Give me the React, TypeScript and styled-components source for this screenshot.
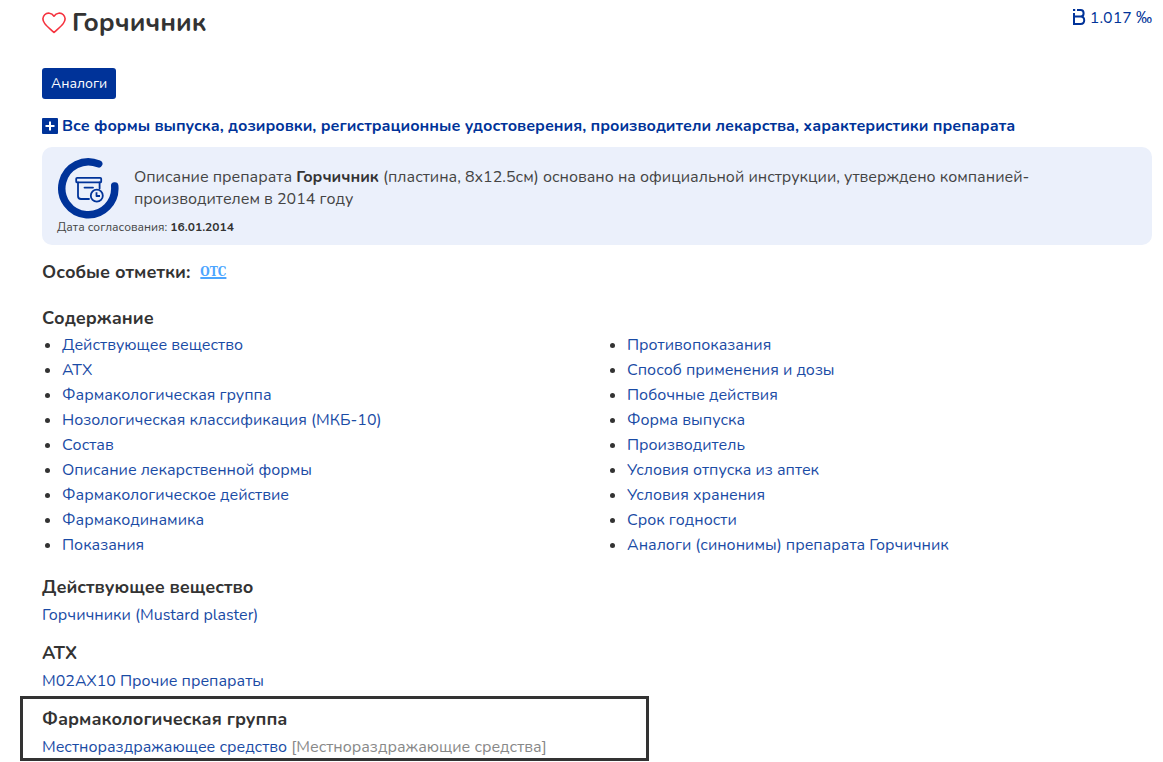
import React from "react";
import styled, { createGlobalStyle } from "styled-components";

const GlobalStyle = createGlobalStyle`
  * { box-sizing: border-box; }
  body {
    margin: 0;
    background: #ffffff;
    color: #333333;
    font-family: Nunito, "Noto Sans", sans-serif;
    font-size: 16px;
    line-height: 25px;
  }
  p, h1, h2, ul { margin: 0; padding: 0; }
`;

const Page = styled.main`
  padding: 0 11px 0 20px;
`;

const Body = styled.div`
  padding-left: 22px;
`;

const Header = styled.header`
  display: flex;
  justify-content: space-between;
  align-items: flex-start;
  padding-top: 5px;
`;

const TitleGroup = styled.div`
  display: flex;
  align-items: center;
  gap: 6px;
`;

const Title = styled.h1`
  font-size: 26px;
  line-height: 36px;
  font-weight: 700;
`;

const FavoriteButton = styled.button`
  display: flex;
  padding: 0;
  border: 0;
  background: none;
  color: #f5333f;
  cursor: pointer;
`;

const Rating = styled.a`
  display: flex;
  align-items: center;
  gap: 4px;
  color: #003399;
  text-decoration: none;
`;

const Permille = styled.span`
  font-family: "Liberation Sans", sans-serif;
`;

const AnalogsButton = styled.button`
  display: block;
  height: 31px;
  margin-top: 27px;
  padding: 0 9px;
  border: 0;
  border-radius: 3px;
  background: #003399;
  color: #ffffff;
  font-family: inherit;
  font-size: 14px;
  cursor: pointer;
`;

const FormsLink = styled.a`
  display: flex;
  align-items: center;
  gap: 4px;
  margin-top: 15px;
  color: #003399;
  font-weight: 700;
  text-decoration: none;
`;

const Notice = styled.section`
  margin-top: 8px;
  padding: 10px 15px 9px;
  border-radius: 10px;
  background: #ebf0fb;
`;

const NoticeRow = styled.div`
  display: flex;
  align-items: center;
  gap: 15px;
`;

const NoticeText = styled.p`
  max-width: 920px;
  line-height: 22px;
  color: #444444;
`;

const NoticeDate = styled.p`
  font-size: 12px;
  line-height: 17px;
  color: #444444;
`;

const Strong = styled.b`
  color: #333333;
  font-weight: 700;
`;

const Marks = styled.div`
  display: flex;
  align-items: center;
  gap: 10px;
  margin-top: 14px;
`;

const Heading = styled.h2`
  font-size: 18px;
  line-height: 26px;
  font-weight: 700;
`;

const OtcLink = styled.a`
  color: #4da6ff;
  font-family: "DejaVu Serif Condensed", "DejaVu Serif", serif;
  font-size: 12px;
  font-weight: 700;
  text-decoration-thickness: 2px;
`;

const Contents = styled.nav`
  margin-top: 20px;
`;

const Columns = styled.div`
  display: grid;
  grid-template-columns: 1fr 1fr;
  gap: 20px;
  padding-top: 2px;
`;

const List = styled.ul`
  padding-left: 20px;
`;

const TextLink = styled.a`
  color: #1a4ba5;
  text-decoration: none;
`;

const Entry = styled.p`
  padding-top: 5px;
  line-height: 21px;
`;

const Section = styled.section<{ $top: number }>`
  margin-top: ${(p) => p.$top}px;
`;

const Highlight = styled.section`
  width: 629px;
  max-width: 100%;
  margin-top: 4px;
  padding: 7px 19px 0;
  border: 3px solid #333333;
`;

const Muted = styled.span`
  color: #888888;
`;

const HeartIcon = () => (
  <svg width="24" height="22" viewBox="0 0 24 22" fill="none" stroke="currentColor" strokeWidth="1.6" aria-hidden="true">
    <path d="M12 20.5C9 17.6 5 14.6 2.8 11.6C.6 8.6.3 5.2 2.7 2.8C5.2.3 9.6.6 12 4.2C14.4.6 18.8.3 21.3 2.8C23.7 5.2 23.4 8.6 21.2 11.6C19 14.6 15 17.6 12 20.5Z" strokeLinejoin="round" />
  </svg>
);

const RatingIcon = () => (
  <svg width="14" height="18" viewBox="0 0 14 18" fill="none" stroke="currentColor" strokeWidth="2" aria-hidden="true">
    <path d="M2 4V15M5 1H8.6C12.6 1 12.6 7.6 8.6 7.6H2M8.6 7.6C13.4 7.6 13.4 15 8.6 15H1" />
    <path d="M1 1H3.2" />
  </svg>
);

const PlusIcon = () => (
  <svg width="16" height="18" viewBox="0 0 16 18" aria-hidden="true">
    <rect width="16" height="16" rx="1" fill="#003399" />
    <path d="M8 3.5V12.5M3.5 8H12.5" stroke="#ffffff" strokeWidth="2" />
  </svg>
);

const ArchiveIcon = () => (
  <svg width="62" height="62" viewBox="0 0 62 62" fill="none" stroke="#003399" aria-hidden="true">
    <path d="M41.7 6.9A26.5 26.5 0 1 0 57.7 28.9" strokeWidth="7.5" strokeLinecap="round" />
    <g strokeWidth="1.8" strokeLinejoin="round">
      <rect x="19.2" y="20.8" width="25" height="4.6" rx="1" />
      <path d="M21 25.5V39Q21 42 24 42H32M42.6 25.5V31.5M27.5 30.6H36" strokeLinecap="round" />
      <circle cx="39.8" cy="38.7" r="6" />
      <path d="M39.5 35.2V39H43" />
    </g>
  </svg>
);

const leftItems = [
  "Действующее вещество",
  "АТХ",
  "Фармакологическая группа",
  "Нозологическая классификация (МКБ-10)",
  "Состав",
  "Описание лекарственной формы",
  "Фармакологическое действие",
  "Фармакодинамика",
  "Показания",
];

const rightItems = [
  "Противопоказания",
  "Способ применения и дозы",
  "Побочные действия",
  "Форма выпуска",
  "Производитель",
  "Условия отпуска из аптек",
  "Условия хранения",
  "Срок годности",
  "Аналоги (синонимы) препарата Горчичник",
];

const LinkList = ({ items }: { items: string[] }) => (
  <List>
    {items.map((item) => (
      <li key={item}>
        <TextLink href="#">{item}</TextLink>
      </li>
    ))}
  </List>
);

export default function App() {
  return (
    <>
      <GlobalStyle />
      <Page>
        <Body>
          <Header>
            <TitleGroup>
              <FavoriteButton type="button" aria-label="В избранное">
                <HeartIcon />
              </FavoriteButton>
              <Title>Горчичник</Title>
            </TitleGroup>
            <Rating href="#">
              <RatingIcon />
              <span>
                1.017 <Permille>‰</Permille>
              </span>
            </Rating>
          </Header>
          <AnalogsButton type="button">Аналоги</AnalogsButton>
          <FormsLink href="#">
            <PlusIcon />
            Все формы выпуска, дозировки, регистрационные удостоверения, производители лекарства, характеристики препарата
          </FormsLink>
          <Notice>
            <NoticeRow>
              <ArchiveIcon />
              <NoticeText>
                Описание препарата <Strong>Горчичник</Strong> (пластина, 8х12.5см) основано на официальной инструкции,
                утверждено компанией-производителем в 2014 году
              </NoticeText>
            </NoticeRow>
            <NoticeDate>
              Дата согласования: <Strong>16.01.2014</Strong>
            </NoticeDate>
          </Notice>
          <Marks>
            <Heading>Особые отметки:</Heading>
            <OtcLink href="#">ОТС</OtcLink>
          </Marks>
          <Contents>
            <Heading>Содержание</Heading>
            <Columns>
              <LinkList items={leftItems} />
              <LinkList items={rightItems} />
            </Columns>
          </Contents>
          <Section $top={16}>
            <Heading>Действующее вещество</Heading>
            <Entry>
              <TextLink href="#">Горчичники (Mustard plaster)</TextLink>
            </Entry>
          </Section>
          <Section $top={14}>
            <Heading>АТХ</Heading>
            <Entry>
              <TextLink href="#">M02AX10 Прочие препараты</TextLink>
            </Entry>
          </Section>
        </Body>
        <Highlight>
          <Heading>Фармакологическая группа</Heading>
          <Entry>
            <TextLink href="#">Местнораздражающее средство</TextLink> <Muted>[Местнораздражающие средства]</Muted>
          </Entry>
        </Highlight>
      </Page>
    </>
  );
}
